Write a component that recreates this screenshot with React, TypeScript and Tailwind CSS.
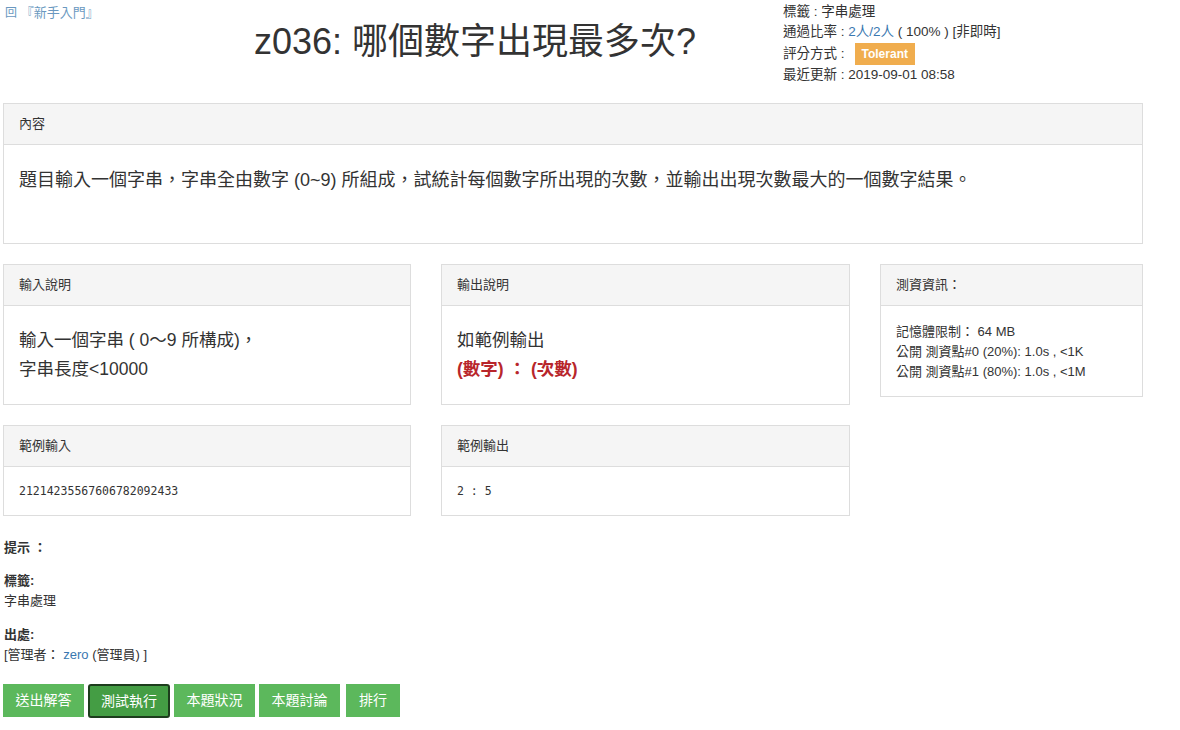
import React from 'react';

const font = { fontFamily: '"Liberation Sans", "Noto Sans CJK TC", sans-serif' };

function Panel({ title, children, className }: { title: string; children: React.ReactNode; className?: string }) {
  return (
    <div className={'border border-[#dddddd] bg-white ' + (className || '')}>
      <div className="h-[41px] bg-[#f5f5f5] border-b border-[#dddddd] flex items-center px-[15px] text-[13px] text-[#333]">
        {title}
      </div>
      {children}
    </div>
  );
}

export default function App() {
  return (
    <div className="w-[1180px] h-[730px] bg-white text-[#333] relative overflow-hidden" style={font}>
      {/* top header */}
      <div className="flex h-[103px]">
        <div className="w-[200px] pl-[5px] pt-[3px] text-[13px] text-[#6a98c0]">
          <span className="text-[12px]">回</span> 『新手入門』
        </div>
        <div className="w-[550px] flex justify-center pt-[18px]">
          <h1 className="text-[36px] leading-[48px] text-[#333]">z036: 哪個數字出現最多次?</h1>
        </div>
        <div className="pl-[33px] pt-[2px] text-[13.5px] leading-[20.4px] text-[#333]">
          <div>標籤 : 字串處理</div>
          <div>
            通過比率 : <span className="text-[#3a78b0]">2人/2人</span> ( 100% ) [非即時]
          </div>
          <div className="flex items-center">
            評分方式 :
            <span className="ml-[10px] bg-[#f0ad4e] text-white text-[12px] font-bold px-[7px] h-[22px] inline-flex items-center">
              Tolerant
            </span>
          </div>
          <div>最近更新 : 2019-09-01 08:58</div>
        </div>
      </div>

      <div className="pl-[3px]">
        <Panel title="內容" className="w-[1140px] h-[141px]">
          <div className="px-[15px] pt-[22px] text-[18px] leading-[26px] text-[#333]">
            題目輸入一個字串，字串全由數字 (0~9) 所組成，試統計每個數字所出現的次數，並輸出出現次數最大的一個數字結果。
          </div>
        </Panel>

        <div className="flex gap-[30px] mt-[20px] items-start">
          <Panel title="輸入說明" className="w-[408px] h-[141px]">
            <div className="px-[15px] pt-[20px] text-[17.5px] leading-[29px]">
              <div>輸入一個字串 ( 0～9 所構成)，</div>
              <div>字串長度&lt;10000</div>
            </div>
          </Panel>
          <Panel title="輸出說明" className="w-[409px] h-[141px]">
            <div className="px-[15px] pt-[20px] text-[17.5px] leading-[29px]">
              <div>如範例輸出</div>
              <div className="text-[#b8262b] font-bold">(數字) ： (次數)</div>
            </div>
          </Panel>
          <Panel title="測資資訊：" className="w-[263px] h-[133px]">
            <div className="px-[15px] pt-[16px] text-[13px] leading-[20px]">
              <div>記憶體限制： 64 MB</div>
              <div>公開 測資點#0 (20%): 1.0s , &lt;1K</div>
              <div>公開 測資點#1 (80%): 1.0s , &lt;1M</div>
            </div>
          </Panel>
        </div>

        <div className="flex gap-[30px] mt-[20px]">
          <Panel title="範例輸入" className="w-[408px] h-[91px]">
            <div className="px-[15px] pt-[16px] text-[11.5px]" style={{ fontFamily: '"DejaVu Sans Mono", "Liberation Mono", monospace' }}>
              21214235567606782092433
            </div>
          </Panel>
          <Panel title="範例輸出" className="w-[409px] h-[91px]">
            <div className="px-[15px] pt-[16px] text-[11.5px]" style={{ fontFamily: '"DejaVu Sans Mono", "Liberation Mono", monospace' }}>
              2 : 5
            </div>
          </Panel>
        </div>
      </div>

      <div className="pl-[4px] text-[13px] leading-[20px] mt-[22px]">
        <div className="font-bold">提示 ：</div>
        <div className="font-bold mt-[13px]">標籤:</div>
        <div>字串處理</div>
        <div className="font-bold mt-[14px]">出處:</div>
        <div>
          [管理者： <span className="text-[#3a78b0]">zero</span> (管理員) ]
        </div>
      </div>

      <div className="flex gap-[4px] pl-[3px] mt-[19px] text-[14px] text-white">
        <div className="w-[81px] h-[33px] bg-[#5cb85c] flex items-center justify-center">送出解答</div>
        <div className="w-[82px] h-[34px] bg-[#449d44] border-2 border-[#1d3d1d] rounded-[3px] flex items-center justify-center">測試執行</div>
        <div className="w-[81px] h-[33px] bg-[#5cb85c] flex items-center justify-center">本題狀況</div>
        <div className="w-[81px] h-[33px] bg-[#5cb85c] flex items-center justify-center">本題討論</div>
        <div className="w-[54px] h-[33px] ml-[2px] bg-[#5cb85c] flex items-center justify-center">排行</div>
      </div>
    </div>
  );
}
